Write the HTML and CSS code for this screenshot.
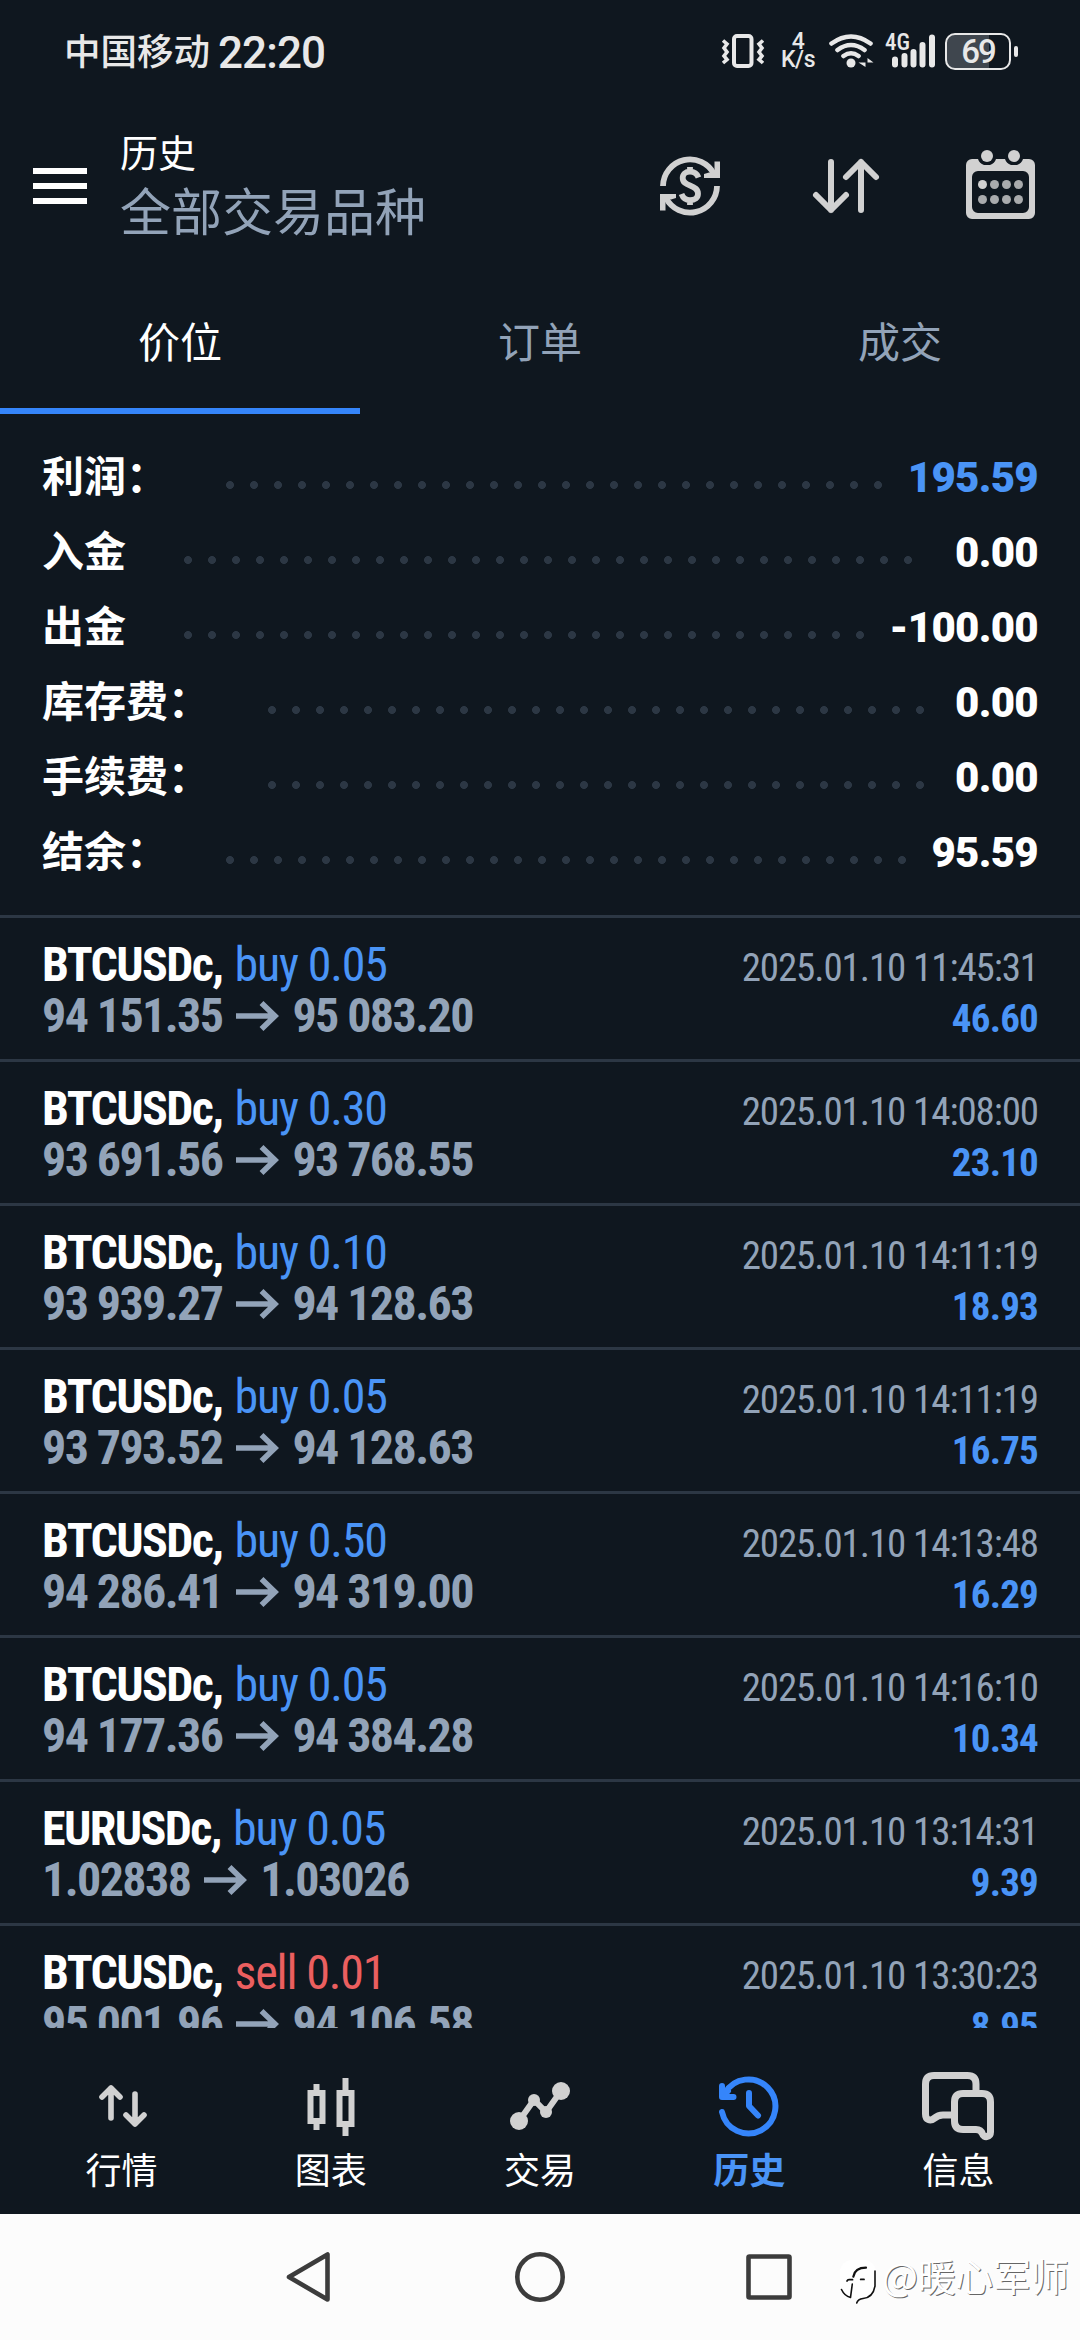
FILE: index.html
```
<!DOCTYPE html>
<html lang="zh-CN">
<head>
<meta charset="utf-8">
<title>历史</title>
<link rel="stylesheet" href="styles.css">
</head>
<body>
<div class="status">
  <span class="carrier">中国移动</span><span class="clock">22:20</span>
  <svg class="vibrate" width="44" height="40" viewBox="0 0 44 40" fill="none" stroke="#e8e8e8" stroke-width="4"><rect x="13" y="5" width="17.5" height="30" rx="3"/><path stroke-width="3.6" d="M2 9.500l4 3.500-3 4 3 4-3 4 3 3.500-4 3.500M42 9.500l-4 3.500 3 4-3 4 3 4-3 3.500 4 3.500"/></svg>
  <span class="speed"><span>4</span><span>K/s</span></span>
  <svg class="wifi" width="46" height="40" viewBox="0 0 46 40" fill="none" stroke="#e8e8e8" stroke-width="4.600" stroke-linecap="round"><path d="M3.500 12.500Q23 -1.500 42.500 12.500M9.500 19Q23 9 36.500 19M15.500 25Q23 19.500 30.500 25"/><circle cx="23" cy="32" r="4.500" fill="#e8e8e8" stroke="none"/><path d="M37.500 27v9l-7-4.500h7zM39.500 36v-9l6 4.500h-6z" fill="#e8e8e8" stroke="none"/></svg>
  <span class="signal"><span class="net">4G</span><svg width="52" height="40" viewBox="0 0 52 40" stroke="#e8e8e8" stroke-width="6" stroke-linecap="round"><path d="M10 28.500V33.500M19.500 25V33.500M28.500 21V33.500M37.500 14V33.500M47 6.500V33.500"/></svg></span>
  <span class="battery">69</span><span class="nub"></span>
</div>

<header class="appbar">
  <div class="burger"><i></i><i></i><i></i></div>
  <div class="heading"><div class="title">历史</div><div class="subtitle">全部交易品种</div></div>
  <div class="actions">
    <svg width="72" height="72" viewBox="0 0 72 72" fill="none" stroke="#d1d1d1" stroke-width="5.800"><path d="M9 36A27 27 0 0 1 60 24M63 36A27 27 0 0 1 12 48"/><path d="M60.500 11.500h5.500V28H50v-4l5-1.500h5.500zM11.500 60.500H6V44h16v4l-5 1.500h-5.500z" fill="#d1d1d1" stroke="none"/><path d="M44.500 27.500C43 23.500 40 21.700 36 21.700c-4.500 0-7.300 2.500-7.300 6.300 0 4.500 3.300 6 7.300 7.500 5 2 8 3.800 8 8.200 0 4-3.200 6.500-8 6.500-4.200 0-7-2.300-8.500-6.200M36 17v5M36 50v5"/></svg>
    <svg width="72" height="72" viewBox="0 0 72 72" fill="none" stroke="#d1d1d1" stroke-width="6" stroke-linecap="round" stroke-linejoin="round"><path d="M21 12V60M6 45l15 15 15-15M51 60V12M36 27l15-15 15 15"/></svg>
    <svg width="72" height="72" viewBox="2 0 72 72"><path fill="#d1d1d1" fill-rule="evenodd" d="M8 9H14A9 9 0 0 0 20 15H26A9 9 0 0 0 32 9H41A9 9 0 0 0 47 15H53A9 9 0 0 0 59 9H65a6 6 0 0 1 6 6V63a6 6 0 0 1-6 6H8a6 6 0 0 1-6-6V15a6 6 0 0 1 6-6zM14 21a6 6 0 0 0-6 6V57a6 6 0 0 0 6 6H59a6 6 0 0 0 6-6V27a6 6 0 0 0-6-6z"/><g fill="#d1d1d1"><circle cx="23" cy="6" r="6"/><circle cx="50" cy="6" r="6"/><circle cx="18.500" cy="34.500" r="4.500"/></g><g fill="#a9abad"><circle cx="30.500" cy="34.500" r="4.500"/><circle cx="42.500" cy="34.500" r="4.500"/><circle cx="54.500" cy="34.500" r="4.500"/><circle cx="18.500" cy="49.500" r="4.500"/><circle cx="30.500" cy="49.500" r="4.500"/><circle cx="42.500" cy="49.500" r="4.500"/><circle cx="54.500" cy="49.500" r="4.500"/></g></svg>
  </div>
</header>

<nav class="tabs"><div class="tab active">价位</div><div class="tab">订单</div><div class="tab">成交</div></nav>

<section class="summary">
  <div class="sum"><span>利润&#65306;</span><i class="dots" style="width:672px"></i><b class="blue">195.59</b></div>
  <div class="sum"><span>入金</span><i class="dots" style="width:744px"></i><b>0.00</b></div>
  <div class="sum"><span>出金</span><i class="dots" style="width:696px"></i><b>-100.00</b></div>
  <div class="sum"><span>库存费&#65306;</span><i class="dots" style="width:672px"></i><b>0.00</b></div>
  <div class="sum"><span>手续费&#65306;</span><i class="dots" style="width:672px"></i><b>0.00</b></div>
  <div class="sum"><span>结余&#65306;</span><i class="dots" style="width:696px"></i><b>95.59</b></div>
</section>

<svg class="defs"><symbol id="arrow" viewBox="0 0 43 34"><path d="M0 17H39M25.500 4L39 17 25.500 30" fill="none" stroke="#92a3b8" stroke-width="5.600"/></symbol></svg>
<main class="deals">
  <article class="deal"><div class="line"><span class="sym">BTCUSDc,</span><span class="side blue">buy 0.05</span><time>2025.01.10 11:45:31</time></div><div class="line"><span class="price">94 151.35</span><svg class="to"><use href="#arrow"/></svg><span class="price">95 083.20</span><span class="profit">46.60</span></div></article>
  <article class="deal"><div class="line"><span class="sym">BTCUSDc,</span><span class="side blue">buy 0.30</span><time>2025.01.10 14:08:00</time></div><div class="line"><span class="price">93 691.56</span><svg class="to"><use href="#arrow"/></svg><span class="price">93 768.55</span><span class="profit">23.10</span></div></article>
  <article class="deal"><div class="line"><span class="sym">BTCUSDc,</span><span class="side blue">buy 0.10</span><time>2025.01.10 14:11:19</time></div><div class="line"><span class="price">93 939.27</span><svg class="to"><use href="#arrow"/></svg><span class="price">94 128.63</span><span class="profit">18.93</span></div></article>
  <article class="deal"><div class="line"><span class="sym">BTCUSDc,</span><span class="side blue">buy 0.05</span><time>2025.01.10 14:11:19</time></div><div class="line"><span class="price">93 793.52</span><svg class="to"><use href="#arrow"/></svg><span class="price">94 128.63</span><span class="profit">16.75</span></div></article>
  <article class="deal"><div class="line"><span class="sym">BTCUSDc,</span><span class="side blue">buy 0.50</span><time>2025.01.10 14:13:48</time></div><div class="line"><span class="price">94 286.41</span><svg class="to"><use href="#arrow"/></svg><span class="price">94 319.00</span><span class="profit">16.29</span></div></article>
  <article class="deal"><div class="line"><span class="sym">BTCUSDc,</span><span class="side blue">buy 0.05</span><time>2025.01.10 14:16:10</time></div><div class="line"><span class="price">94 177.36</span><svg class="to"><use href="#arrow"/></svg><span class="price">94 384.28</span><span class="profit">10.34</span></div></article>
  <article class="deal"><div class="line"><span class="sym">EURUSDc,</span><span class="side blue">buy 0.05</span><time>2025.01.10 13:14:31</time></div><div class="line"><span class="price">1.02838</span><svg class="to"><use href="#arrow"/></svg><span class="price">1.03026</span><span class="profit">9.39</span></div></article>
  <article class="deal"><div class="line"><span class="sym">BTCUSDc,</span><span class="side red">sell 0.01</span><time>2025.01.10 13:30:23</time></div><div class="line"><span class="price">95 001.96</span><svg class="to"><use href="#arrow"/></svg><span class="price">94 106.58</span><span class="profit">8.95</span></div></article>
</main>

<nav class="bottom">
  <div class="item"><svg width="72" height="72" viewBox="0 0 72 72" fill="none" stroke="#d1d1d1" stroke-width="5.600" stroke-linecap="round" stroke-linejoin="round"><path d="M25 48V18M16 27l9-9 9 9M49 24V54M40 45l9 9 9-9"/></svg><span>行情</span></div>
  <div class="item"><svg width="72" height="72" viewBox="0 0 72 72" fill="none" stroke="#d1d1d1" stroke-width="6"><path d="M15.500 23H27.500V51H15.500zM44.500 23H56.500V54H44.500zM21.500 14v7M21.500 53v7M50.500 8v13M50.500 56v10"/></svg><span>图表</span></div>
  <div class="item"><svg width="72" height="72" viewBox="0 0 72 72" fill="#d1d1d1"><path d="M15 51L30 30L42 42L57 21" fill="none" stroke="#d1d1d1" stroke-width="6"/><circle cx="15" cy="51" r="9"/><circle cx="30" cy="30" r="6"/><circle cx="42" cy="42" r="6"/><circle cx="57" cy="21" r="9"/></svg><span>交易</span></div>
  <div class="item on"><svg width="72" height="72" viewBox="0 0 72 72" fill="none" stroke="#3585fa" stroke-width="6" stroke-linecap="round" stroke-linejoin="round"><path d="M9 42A27 27 0 1 0 12 23M9 16V27H20.500M10 26l5-5M36 23V36L45 45.500"/></svg><span>历史</span></div>
  <div class="item"><svg width="72" height="72" viewBox="0 0 72 72" fill="none" stroke="#d1d1d1" stroke-width="7"><path d="M54 22V14Q54 5.500 45.500 5.500H12Q3.500 5.500 3.500 14V44C3.500 50 8.500 51.500 12 48.500Q16 45 21 45H31"/><path d="M41 23.500H60Q68.500 23.500 68.500 32V62C68.500 67.500 61.500 68 60.500 64Q59 59.500 54 59.500H41Q32.500 59.500 32.500 51V32Q32.500 23.500 41 23.500Z"/></svg><span>信息</span></div>
</nav>

<footer class="sysnav">
  <svg width="54" height="54" viewBox="0 0 54 54"><path d="M44.500 4.500V49.500L6 27z"/></svg>
  <svg width="54" height="54" viewBox="0 0 54 54"><circle cx="27" cy="27" r="22.700"/></svg>
  <svg width="54" height="54" viewBox="0 0 54 54"><rect x="5.500" y="6.500" width="41" height="41" rx="1"/></svg>
  <div class="mark"><svg width="42" height="54" viewBox="0 0 42 54" fill="none"><rect x="2" y="9" width="36" height="38" rx="12" fill="#fff"/><g stroke="#111" stroke-linecap="round" stroke-linejoin="round"><path d="M28 16.700C21 16.700 16.500 19 15.300 25.700" stroke-width="2.200"/><path d="M9 30Q9.500 28.700 11 28.700H14.500M22.700 28.400H26" stroke-width="1.800"/><path d="M3.500 38.500Q6.500 45 12.500 46.500L14.300 33M37 20V35Q35 46.500 25 47.500Q20 48 18.700 52" stroke-width="1.600"/></g></svg><span>@暖心军师</span></div>
</footer>
</body>
</html>
```
FILE: styles.css
```
* { box-sizing: border-box; }
body {
  margin: 0;
  width: 1080px;
  height: 2340px;
  overflow: hidden;
  display: flex;
  flex-direction: column;
  background: #0f171f;
  color: #fff;
  font-family: Roboto, "Noto Sans CJK SC", sans-serif;
}
svg { flex: none; display: block; }
.blue { color: #4a94f6; }
.red { color: #eb5f5f; }
.defs { width: 0; height: 0; }

/* status bar */
.status { height: 102px; padding: 0 62px 0 64px; display: flex; align-items: center; color: #e8e8e8; }
.carrier { font-size: 36.500px; line-height: 48px; font-weight: 500; margin-top: 3px; }
.clock { font-size: 44px; line-height: 48px; font-weight: 500; margin: 3px auto 0 8px; letter-spacing: -0.9px; }
.vibrate { margin-right: 16px; }
.speed { width: 34px; display: flex; flex-direction: column; align-items: center; font-size: 23px; line-height: 18px; font-weight: 500; letter-spacing: -0.4px; margin-right: 13px; }
.wifi { margin-right: 11px; }
.signal { display: grid; margin-right: 8px; }
.signal > * { grid-area: 1 / 1; }
.net { font: 500 23px/24px "Roboto Condensed", sans-serif; }
.battery {
  width: 66px; height: 37px;
  border: 2.500px solid #e8e8e8; border-radius: 10px;
  background: linear-gradient(90deg, #3f464e 68%, transparent 68%);
  font-size: 33px; line-height: 33px; font-weight: 500; letter-spacing: -2px; text-align: center;
}
.nub { width: 4px; height: 11px; margin-left: 3px; border-radius: 2px; background: #e8e8e8; }

/* app bar */
.appbar { height: 168px; padding: 0 42px 0 33px; display: flex; align-items: center; }
.burger { width: 54px; display: grid; gap: 9px; }
.burger i { height: 6px; background: #fff; }
.heading { margin: 4px auto 0 33px; }
.title { font-size: 38px; line-height: 51px; }
.subtitle { font-size: 51px; line-height: 68px; color: #92a3b8; }
.actions { display: flex; gap: 84px; }

/* tabs */
.tabs { display: flex; height: 144px; font-size: 42px; line-height: 147px; text-align: center; color: #92a3b8; }
.tab { flex: 1; }
.tab.active { color: #fff; border-bottom: 6px solid #3585fa; }

/* totals */
.summary { padding: 26px 42px 25px 42px; font-size: 42px; font-weight: 700; }
.sum { height: 75px; line-height: 75px; display: flex; align-items: center; }
.sum b { margin-left: auto; letter-spacing: -0.7px; }
.sum span { margin-right: 50px; }
.dots { height: 8px; margin-top: 15px; background: radial-gradient(circle at 12px 4px, #2c3744 3.600px, transparent 4.300px) 0 0 / 24px 8px; }

/* deals */
.deals { flex: 1; min-height: 0; overflow: hidden; font-family: "Roboto Condensed", sans-serif; }
.deal { height: 144px; padding: 21px 42px 0; border-top: 3px solid #2c3744; }
.line { display: flex; align-items: baseline; height: 51px; line-height: 51px; font-size: 48px; }
.sym, .price { font-weight: 700; letter-spacing: -1.6px; }
.price { color: #92a3b8; }
.side { margin-left: 12px; letter-spacing: -1.15px; }
.to { width: 43px; height: 34px; margin: 0 13px 0 14px; align-self: center; }
time, .profit { margin-left: auto; font-size: 39px; line-height: 45px; color: #92a3b8; letter-spacing: -1.1px; }
.profit { color: #4a94f6; font-weight: 700; letter-spacing: -0.8px; }

/* bottom navigation */
.bottom { height: 186px; padding: 42px 17px 0; display: flex; }
.item { flex: 1; display: flex; flex-direction: column; align-items: center; font-size: 36px; line-height: 40px; }
.item span { margin-top: 10px; }
.on { color: #4a94f6; font-weight: 700; }

/* system navigation */
.sysnav { position: relative; height: 126px; background: #fcfcfc; display: flex; justify-content: center; align-items: center; gap: 176px; }
.sysnav > svg { fill: none; stroke: #3c3c3c; stroke-width: 4.600; stroke-linejoin: round; }
.mark { position: absolute; left: 838px; top: 37px; display: flex; align-items: center; gap: 2px; color: #fff; font: 38px/46px "Noto Sans CJK SC", sans-serif; text-shadow: 1px 1px 0 #666; }
.mark span { margin-top: -7px; letter-spacing: -0.3px; }
```
